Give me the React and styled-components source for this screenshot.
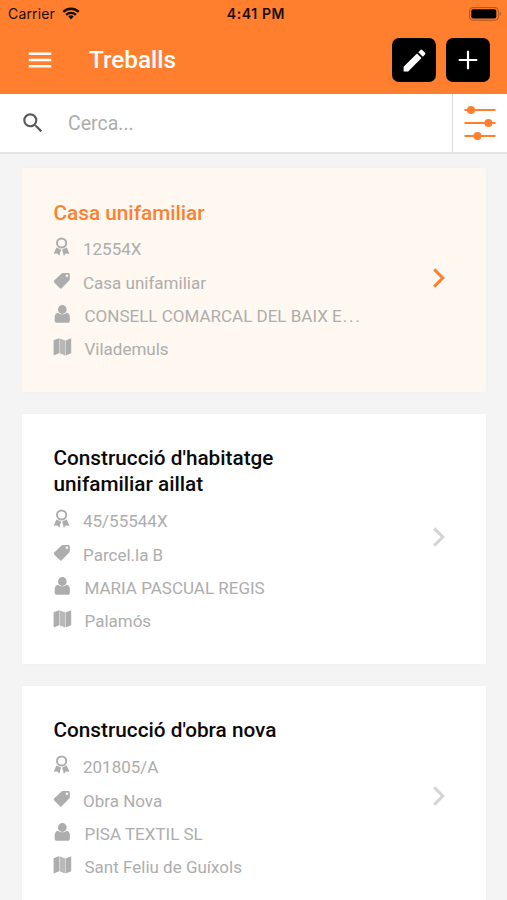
import React, { useState } from "react";
import styled, { createGlobalStyle } from "styled-components";
import { MdMenu, MdEdit, MdSearch } from "react-icons/md";

const MAX_CLIENT = 27;

const treballs = [
  {
    id: 1,
    titol: "Casa unifamiliar",
    codi: "12554X",
    tipus: "Casa unifamiliar",
    client: "CONSELL COMARCAL DEL BAIX EMPORDÀ",
    poblacio: "Vilademuls",
  },
  {
    id: 2,
    titol: "Construcció d'habitatge unifamiliar aillat",
    codi: "45/55544X",
    tipus: "Parcel.la B",
    client: "MARIA PASCUAL REGIS",
    poblacio: "Palamós",
  },
  {
    id: 3,
    titol: "Construcció d'obra nova",
    codi: "201805/A",
    tipus: "Obra Nova",
    client: "PISA TEXTIL SL",
    poblacio: "Sant Feliu de Guíxols",
  },
];

const WifiIcon = () => (
  <svg width="18" height="13" viewBox="0 0 18 13" fill="none" stroke="#1a0d04" strokeWidth="2.3">
    <path d="M1.3 4.9a11 11 0 0 1 15.4 0" />
    <path d="M4.1 7.9a7 7 0 0 1 9.8 0" />
    <path d="M6.3 9.6a3.9 3.9 0 0 1 5.4 0L9 12.4z" fill="#1a0d04" stroke="none" />
  </svg>
);

const BatteryIcon = () => (
  <svg width="33" height="14" viewBox="0 0 33 14">
    <rect x="0.6" y="0.6" width="28.8" height="12.6" rx="3.4" fill="none" stroke="#a8541e" strokeWidth="1" />
    <rect x="2.3" y="2.3" width="25" height="9.2" rx="1.8" fill="#000" />
    <path d="M30.9 4.7c1.4.6 1.4 3.8 0 4.4z" fill="#a8541e" />
  </svg>
);

const PlusIcon = () => (
  <svg width="20" height="20" viewBox="0 0 20 20" stroke="white" strokeWidth="2.2">
    <path d="M10 .7v18.6M.7 10h18.6" />
  </svg>
);

const FilterIcon = () => (
  <svg width="32" height="36" viewBox="0 0 32 36" fill="#ff7f2e" stroke="#ff7f2e">
    <path d="M1.3 5h29.4M1.3 18h29.4M1.3 31h29.4" strokeWidth="2.2" strokeLinecap="round" />
    <circle cx="7" cy="5" r="4" stroke="none" />
    <circle cx="24.4" cy="18" r="4" stroke="none" />
    <circle cx="13.5" cy="31" r="4" stroke="none" />
  </svg>
);

const AwardIcon = () => (
  <svg width="18" height="20" viewBox="0 0 18 20">
    <circle cx="8.6" cy="6" r="4.6" fill="none" stroke="#adadad" strokeWidth="2" />
    <path d="M3.4 10.6l4.7 2-1.7 6.2-2-2.3-3.7.2z" fill="#adadad" />
    <path d="M13.8 10.6l-4.7 2 1.7 6.2 2-2.3 3.7.2z" fill="#adadad" />
  </svg>
);

const TagIcon = () => (
  <svg width="18" height="20" viewBox="0 0 18 20">
    <path
      d="M10 2h5.1c1 0 1.7.7 1.7 1.7v4.4c0 .6-.2 1-.6 1.4L9 17.1c-.7.7-1.6.7-2.3 0l-5.5-5.5c-.6-.6-.6-1.4 0-2l7.3-7c.4-.4.9-.6 1.5-.6z"
      fill="#adadad"
    />
    <circle cx="13.9" cy="4.8" r="1.2" fill="#fff" />
  </svg>
);

const UserIcon = () => (
  <svg width="18" height="20" viewBox="0 0 18 20" fill="#adadad">
    <circle cx="9.3" cy="5.5" r="4.4" />
    <path d="M5.1 8.7c2.2 2.1 6.2 2.1 8.4 0 2.3.4 3.4 2.2 3.4 4.6v3.1c0 1.5-.9 2.4-2.4 2.4H4.1c-1.5 0-2.4-.9-2.4-2.4v-3.1c0-2.4 1.1-4.2 3.4-4.6z" />
  </svg>
);

const MapIcon = () => (
  <svg width="19" height="20" viewBox="0 0 19 20" fill="#adadad">
    <path d="M.6 3.3l5.5-2v15l-5.5 2.2z" />
    <path d="M6.5 1.3l5.7 2.2v15l-5.7-2.2z" opacity="0.85" />
    <path d="M12.6 3.5l5.6-2.2v15l-5.6 2.2z" />
  </svg>
);

const Chevron = ({ color }) => (
  <svg width="14" height="20" viewBox="0 0 14 20" fill="none" stroke={color} strokeWidth="3">
    <path d="M2.2 1.4l8.6 8.6-8.6 8.6" />
  </svg>
);

export default function App() {
  const [selected, setSelected] = useState(1);
  const [cerca, setCerca] = useState("");

  return (
    <>
      <GlobalStyle />
      <Container>
        <Header>
          <StatusBar>
            <div className="carrier">
              <span>Carrier</span>
              <WifiIcon />
            </div>
            <Clock>4:41 PM</Clock>
            <div className="battery">
              <BatteryIcon />
            </div>
          </StatusBar>
          <Toolbar>
            <MdMenu size={30} />
            <h1>Treballs</h1>
            <ActionButton>
              <MdEdit size={29} />
            </ActionButton>
            <ActionButton>
              <PlusIcon />
            </ActionButton>
          </Toolbar>
        </Header>
        <SearchBar>
          <MdSearch size={26} />
          <input
            value={cerca}
            placeholder="Cerca..."
            onChange={(e) => setCerca(e.target.value)}
          />
          <Filter>
            <FilterIcon />
          </Filter>
        </SearchBar>
        <List>
          {treballs.map((treball) => {
            const active = treball.id === selected;
            return (
              <Card key={treball.id} $active={active} onClick={() => setSelected(treball.id)}>
                <div className="info">
                  <Title $active={active}>{treball.titol}</Title>
                  <Row $first>
                    <AwardIcon />
                    <Label>{treball.codi}</Label>
                  </Row>
                  <Row>
                    <TagIcon />
                    <Label>{treball.tipus}</Label>
                  </Row>
                  <Row>
                    <UserIcon />
                    <Label $indent="1.5px">
                      {treball.client.slice(0, MAX_CLIENT)}
                      {treball.client.length > MAX_CLIENT && <Dots>...</Dots>}
                    </Label>
                  </Row>
                  <Row>
                    <MapIcon />
                    <Label $indent="0.5px">{treball.poblacio}</Label>
                  </Row>
                </div>
                <Chevron color={active ? "#ff7f2e" : "#d4d4d4"} />
              </Card>
            );
          })}
        </List>
      </Container>
    </>
  );
}

const GlobalStyle = createGlobalStyle`
  * {
    box-sizing: border-box;
  }
  body {
    margin: 0;
    background-color: #f4f4f4;
    font-family: Roboto, sans-serif;
  }
`;

const Container = styled.div`
  display: flex;
  flex-direction: column;
  width: 100%;
  height: 900px;
  overflow: hidden;
  background-color: #f4f4f4;
`;

const Header = styled.header`
  flex: none;
  height: 94px;
  background-color: #ff7f2e;
`;

const StatusBar = styled.div`
  display: grid;
  grid-template-columns: 1fr auto 1fr;
  align-items: center;
  height: 27px;
  padding: 0 5px 0 8px;
  color: #1a0d04;
  font-family: Inter, sans-serif;
  font-size: 14px;
  .carrier {
    display: flex;
    align-items: center;
    gap: 7px;
    letter-spacing: 0.15px;
  }
  .battery {
    display: flex;
    justify-content: flex-end;
  }
`;

const Clock = styled.span`
  padding-left: 2px;
  font-weight: 600;
  letter-spacing: 0.6px;
`;

const Toolbar = styled.div`
  display: flex;
  align-items: center;
  height: 66px;
  padding: 0 17px 0 25px;
  color: white;
  h1 {
    flex: 1;
    margin: 0 0 1px 34px;
    font-size: 24.3px;
    font-weight: 500;
    line-height: 28px;
  }
`;

const ActionButton = styled.button`
  display: flex;
  align-items: center;
  justify-content: center;
  width: 44px;
  height: 44px;
  margin-left: 10px;
  padding: 0;
  border: none;
  border-radius: 7px;
  background-color: black;
  color: white;
`;

const SearchBar = styled.div`
  flex: none;
  display: flex;
  align-items: center;
  height: 60px;
  padding-left: 20px;
  border-bottom: 2px solid #e4e4e4;
  background-color: white;
  color: #5a5a5a;
  input {
    flex: 1;
    min-width: 0;
    margin-left: 22px;
    padding: 0;
    border: none;
    outline: none;
    font-family: inherit;
    font-size: 19.5px;
    &::placeholder {
      color: #adadad;
    }
  }
`;

const Filter = styled.div`
  display: flex;
  align-items: center;
  justify-content: center;
  width: 55px;
  height: 100%;
  border-left: 1px solid #dcdcdc;
`;

const List = styled.div`
  display: flex;
  flex-direction: column;
  gap: 21.8px;
  padding: 14px 21px 0 22px;
`;

const Card = styled.div`
  flex: none;
  display: flex;
  align-items: center;
  justify-content: space-between;
  padding: 31.6px 40px 26.5px 31.5px;
  background-color: ${({ $active }) => ($active ? "#fef8f1" : "white")};
  box-shadow: 0 0 2px rgba(0, 0, 0, 0.03);
  cursor: pointer;
  .info {
    width: 310px;
  }
  > svg {
    flex: none;
    margin-bottom: 9px;
  }
`;

const Title = styled.h2`
  max-width: 250px;
  margin: 0 0 6.4px;
  font-size: 20.75px;
  font-weight: 500;
  line-height: 26px;
  color: ${({ $active }) => ($active ? "#ff7f2e" : "#0a0a0a")};
`;

const Row = styled.div`
  display: flex;
  align-items: center;
  height: ${({ $first }) => ($first ? "34px" : "33px")};
  margin-bottom: ${({ $first }) => ($first ? "0.5px" : "0")};
  svg {
    flex: none;
    margin: 0 12.5px 3px -1px;
  }
`;

const Label = styled.span`
  white-space: nowrap;
  margin-left: ${({ $indent }) => $indent || "0"};
  font-size: 17px;
  color: #adadad;
`;

const Dots = styled.span`
  margin-left: 1px;
  letter-spacing: 1.9px;
`;
